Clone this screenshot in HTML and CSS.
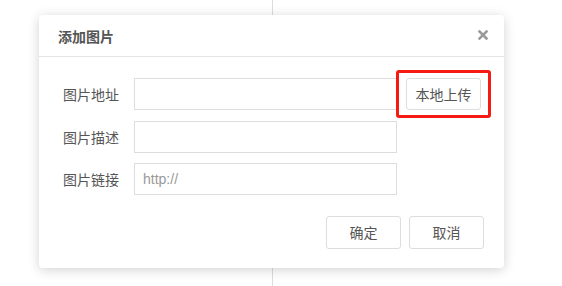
FILE: index.html
```html
<!DOCTYPE html>
<html lang="zh-CN">
  <head>
    <meta charset="UTF-8" />
    <title>添加图片</title>
    <link rel="stylesheet" href="styles.css">
  </head>
  <body>
    <div class="page">
      <div class="pane pane-left"></div>
      <div class="pane pane-right"></div>
    </div>
    <div class="dialog">
      <div class="dialog-header">
        <span class="dialog-title">添加图片</span>
        <span class="dialog-close">
          <svg width="10" height="10" viewBox="0 0 10 10">
            <path d="M1.5 1.5 L8.5 8.5 M8.5 1.5 L1.5 8.5" stroke="#9a9a9a" stroke-width="2.5" stroke-linecap="square" />
          </svg>
        </span>
      </div>
      <div class="dialog-body">
        <div class="form-row">
          <label class="form-label">图片地址</label>
          <input class="form-input" type="text" name="src" />
          <div class="highlight">
            <button class="btn">本地上传</button>
          </div>
        </div>
        <div class="form-row">
          <label class="form-label">图片描述</label>
          <input class="form-input" type="text" name="alt" />
        </div>
        <div class="form-row">
          <label class="form-label">图片链接</label>
          <input class="form-input" type="text" name="href" placeholder="http://" />
        </div>
      </div>
      <div class="dialog-footer">
        <button class="btn">确定</button>
        <button class="btn">取消</button>
      </div>
    </div>
  </body>
</html>
```

FILE: styles.css
```css
body {
  margin: 0;
  padding: 0;
  background-color: #fff;
  font-family: "Liberation Sans", "Noto Sans CJK SC", sans-serif;
  font-size: 14px;
  color: #555;
}

.page {
  display: flex;
  height: 286px;
}

.pane-left {
  width: 272px;
  border-right: 1px solid #ddd;
}

.dialog {
  position: absolute;
  left: 39px;
  top: 15px;
  width: 465px;
  height: 253px;
  background-color: #fff;
  border-radius: 4px;
  box-shadow: 0 2px 12px rgba(0, 0, 0, 0.18);
}

.dialog-header {
  height: 41px;
  border-bottom: 1px solid #e5e5e5;
  display: flex;
  align-items: center;
  justify-content: space-between;
  padding: 0 16px 0 19px;
}

.dialog-title {
  font-weight: bold;
  color: #555;
}

.dialog-close {
  display: flex;
  margin-top: -2px;
}

.dialog-body {
  padding: 21px 0 0 24px;
}

.form-row {
  display: flex;
  align-items: center;
  height: 32px;
  margin-bottom: 10.5px;
}

.form-label {
  width: 71px;
}

.form-input {
  width: 263px;
  height: 32px;
  box-sizing: border-box;
  border: 1px solid #ddd;
  padding: 0 8px;
  font-family: inherit;
  font-size: 14px;
  color: #555;
  outline: none;
}

.form-input::placeholder {
  color: #999;
}

.highlight {
  margin: -8px 0 -8px -1px;
  padding: 5px 7px;
  border: 3px solid #f51a12;
  border-radius: 3px;
  display: flex;
}

.btn {
  width: 75px;
  height: 32px;
  border: 1px solid #ddd;
  border-radius: 3px;
  background-color: #fff;
  font-family: inherit;
  font-size: 14px;
  color: #555;
  padding: 0;
}

.dialog-footer {
  display: flex;
  justify-content: flex-end;
  gap: 8px;
  padding: 10px 20px 0 0;
}

.dialog-footer .btn {
  height: 33px;
}
```
